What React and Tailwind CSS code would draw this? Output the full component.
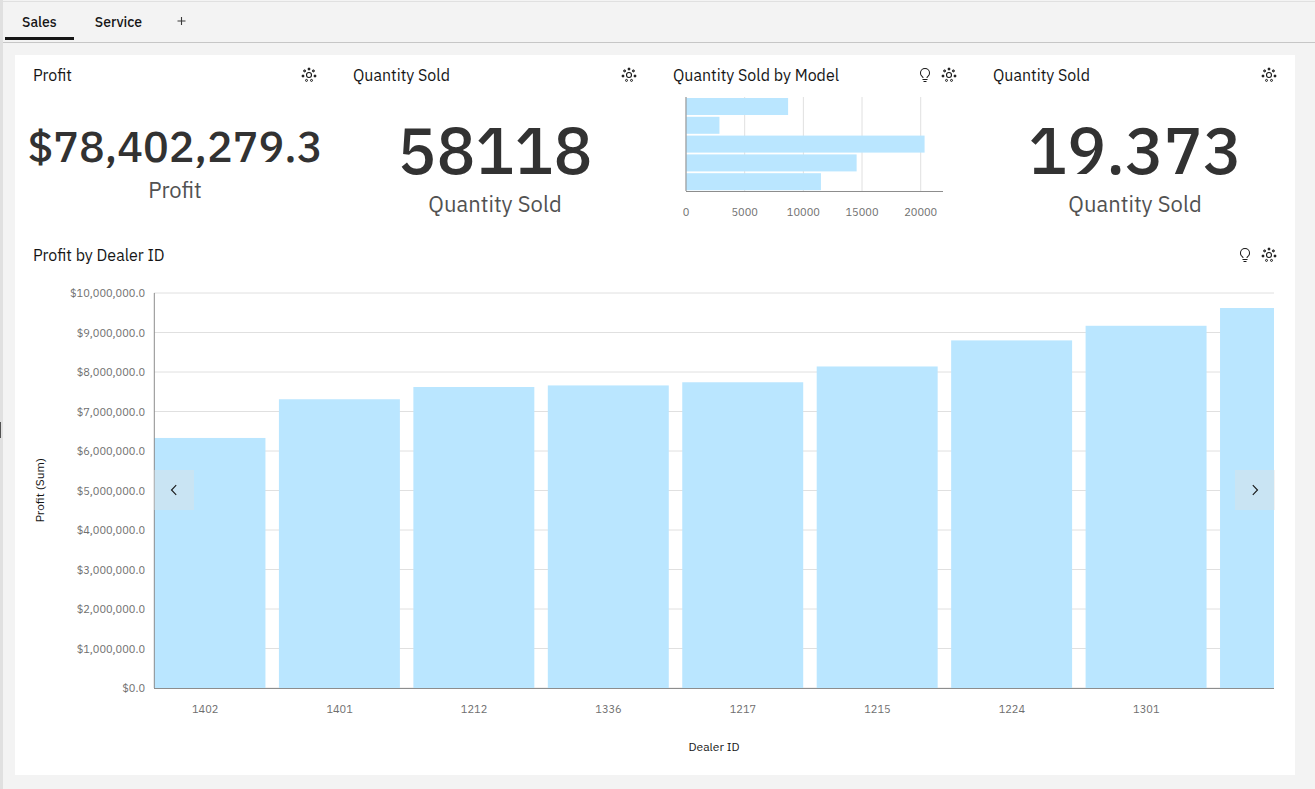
import React from "react";

const models = [8700, 2850, 20330, 14540, 11500];
const modelMax = 21900;
const modelTicks = [0, 5000, 10000, 15000, 20000];

const dealers = [
  { id: "1402", profit: 6.33 },
  { id: "1401", profit: 7.31 },
  { id: "1212", profit: 7.62 },
  { id: "1336", profit: 7.66 },
  { id: "1217", profit: 7.74 },
  { id: "1215", profit: 8.14 },
  { id: "1224", profit: 8.8 },
  { id: "1301", profit: 9.17 },
  { id: "", profit: 9.62 },
];
const profitTicks = [0, 1, 2, 3, 4, 5, 6, 7, 8, 9, 10];
const plotHeight = 395;

function profitLabel(millions) {
  return millions === 0 ? "$0.0" : `$${millions},000,000.0`;
}

function BulbIcon() {
  return (
    <svg width="16" height="16" viewBox="0 0 32 32" fill="#161616" aria-hidden="true">
      <path d="M11 24h10v2H11zM13 28h6v2h-6zM16 2A10 10 0 0 0 6 12a9.19 9.19 0 0 0 3.46 7.62c1 .93 1.54 1.46 1.54 2.38h2c0-1.84-1.11-2.87-2.19-3.86A7.2 7.2 0 0 1 8 12a8 8 0 0 1 16 0 7.2 7.2 0 0 1-2.82 6.14c-1.07 1-2.18 2-2.18 3.86h2c0-.92.53-1.45 1.54-2.39A9.18 9.18 0 0 0 26 12 10 10 0 0 0 16 2Z" />
    </svg>
  );
}

function AssistantIcon() {
  return (
    <svg width="16" height="16" viewBox="0 0 16 16" fill="none" stroke="#161616" aria-hidden="true">
      <circle cx="8" cy="8" r="2.5" strokeWidth="1.1" />
      <g strokeWidth="1">
        <circle cx="8" cy="2" r="1" fill="#161616" />
        <circle cx="3.6" cy="3.9" r="1" fill="#777" />
        <circle cx="12.4" cy="3.9" r="1" fill="#777" />
        <circle cx="2" cy="9" r="1" fill="#161616" />
        <circle cx="14" cy="9" r="1" fill="#161616" />
        <circle cx="5.5" cy="13.4" r="1" />
        <circle cx="10.5" cy="13.4" r="1" />
      </g>
    </svg>
  );
}

function Card({ title, insights, className = "", children }) {
  return (
    <section className={`flex min-w-0 flex-col ${className}`}>
      <header className="flex h-10 shrink-0 items-center justify-between px-[18px]">
        <h2 className="text-base text-[#161616]">{title}</h2>
        <div className="flex gap-2">
          {insights && (
            <button type="button" aria-label={`Insights for ${title}`}>
              <BulbIcon />
            </button>
          )}
          <button type="button" aria-label={`Explore ${title}`}>
            <AssistantIcon />
          </button>
        </div>
      </header>
      {children}
    </section>
  );
}

function Kpi({ title, value, small }) {
  return (
    <Card title={title} className="h-[180px]">
      <div className="flex flex-1 flex-col items-center">
        <p
          className={
            small
              ? "mt-[27px] mb-[6px] text-[43px] leading-[48px] font-medium text-[#323232]"
              : "mt-[23px] mb-2 text-[65px] leading-[64px] font-medium text-[#323232]"
          }
        >
          {value}
        </p>
        <p className="text-[22px] leading-7 text-[#525252]">{title}</p>
      </div>
    </Card>
  );
}

function ModelChart() {
  return (
    <div className="pt-[2px] pr-8 pl-[31px]">
      <svg className="block h-[130px] w-full overflow-visible" role="img" aria-label="Quantity sold by model">
        {modelTicks.map((t) => {
          const x = `${(t / modelMax) * 100}%`;
          return (
            <g key={t}>
              <line x1={x} x2={x} y1="0" y2="94" stroke="#e0e0e0" />
              <text x={x} y="119" textAnchor="middle" fontSize="11" fill="#6f6f6f">
                {t}
              </text>
            </g>
          );
        })}
        {models.map((m, i) => (
          <rect key={i} x="0" y={1 + i * 18.8} width={`${(m / modelMax) * 100}%`} height="17" fill="#bae6ff" />
        ))}
        <line x1="0" x2="0" y1="0" y2="94" stroke="#8d8d8d" />
        <line x1="0" x2="100%" y1="94.5" y2="94.5" stroke="#8d8d8d" />
      </svg>
    </div>
  );
}

function ProfitChart() {
  const step = 12.004;
  return (
    <div className="flex pr-[21px]">
      <div className="flex w-[139px] shrink-0 pt-[18px] pl-[17px]">
        <div className="flex h-[395px] items-center">
          <span className="rotate-180 text-xs text-[#161616] [writing-mode:vertical-rl]">
            Profit (Sum)
          </span>
        </div>
      </div>
      <div className="min-w-0 flex-1 pt-[18px]">
        <div className="relative">
          <svg className="block h-[430px] w-full overflow-visible" role="img" aria-label="Profit by dealer ID">
            {profitTicks.map((t) => {
              const y = plotHeight - t * 39.5;
              return (
                <g key={t}>
                  <line x1="0" x2="100%" y1={y} y2={y} stroke="#e0e0e0" />
                  <text x="-9" y={y + 4} textAnchor="end" fontSize="11" fill="#6f6f6f">
                    {profitLabel(t)}
                  </text>
                </g>
              );
            })}
            <svg width="100%" height={plotHeight}>
              {dealers.map((d, i) => (
                <rect
                  key={i}
                  x={`${-0.85 + i * step}%`}
                  y={plotHeight - d.profit * 39.5}
                  width="10.8%"
                  height={d.profit * 39.5}
                  fill="#bae6ff"
                />
              ))}
            </svg>
            {dealers.map((d, i) => (
              <text
                key={i}
                x={`${4.57 + i * step}%`}
                y="420"
                textAnchor="middle"
                fontSize="11"
                fill="#6f6f6f"
              >
                {d.id}
              </text>
            ))}
            <line x1="0.3" x2="0.3" y1="0" y2="395" stroke="#8d8d8d" />
            <line x1="0" x2="100%" y1="395.5" y2="395.5" stroke="#8d8d8d" />
          </svg>
          <button
            type="button"
            aria-label="Previous dealers"
            className="absolute top-[177px] left-0 flex size-10 items-center justify-center bg-[#e0e0e0]/40"
          >
            <svg width="16" height="16" viewBox="0 0 16 16" fill="none" stroke="#161616" strokeWidth="1.1">
              <path d="M10.2 3.2 5.5 8l4.7 4.8" />
            </svg>
          </button>
          <button
            type="button"
            aria-label="Next dealers"
            className="absolute top-[177px] -right-px flex size-10 items-center justify-center bg-[#e0e0e0]/40"
          >
            <svg width="16" height="16" viewBox="0 0 16 16" fill="none" stroke="#161616" strokeWidth="1.1">
              <path d="M5.8 3.2 10.5 8l-4.7 4.8" />
            </svg>
          </button>
        </div>
        <p className="pt-4 text-center text-xs text-[#161616]">Dealer ID</p>
      </div>
    </div>
  );
}

export default function App() {
  return (
    <div className="flex min-h-screen bg-[#f3f3f3] font-['IBM_Plex_Sans','Inter',sans-serif]">
      <div className="flex w-[3px] shrink-0 flex-col justify-center bg-[#e0e0e0] pt-[70px]">
        <div className="h-4 w-px bg-[#525252]" />
      </div>
      <div className="flex min-w-0 flex-1 flex-col pt-px">
        <nav className="flex h-[42px] items-start border-t border-b border-t-[#e0e0e0] border-b-[#c6c6c6] pl-[2px] text-sm font-medium text-[#161616]">
          <button type="button" className="h-[38px] border-b-3 border-[#161616] px-[17px] pt-1">
            Sales
          </button>
          <button type="button" className="h-[38px] border-b-3 border-transparent px-[21px] pt-1">
            Service
          </button>
          <button type="button" aria-label="Add tab" className="flex h-[38px] w-9 items-center justify-center">
            <svg width="10" height="10" viewBox="0 0 10 10" stroke="#393939" strokeWidth="1.1">
              <path d="M5.5 1v8M1.5 5h8" />
            </svg>
          </button>
        </nav>
        <main className="pt-3 pr-5 pb-[14px] pl-3">
          <div className="grid grid-cols-4 bg-white pb-[14px]">
            <Kpi title="Profit" value="$78,402,279.3" small />
            <Kpi title="Quantity Sold" value="58118" />
            <Card title="Quantity Sold by Model" insights className="h-[180px]">
              <ModelChart />
            </Card>
            <Kpi title="Quantity Sold" value="19.373" />
            <Card title="Profit by Dealer ID" insights className="col-span-4 min-h-[526px]">
              <ProfitChart />
            </Card>
          </div>
        </main>
      </div>
    </div>
  );
}
